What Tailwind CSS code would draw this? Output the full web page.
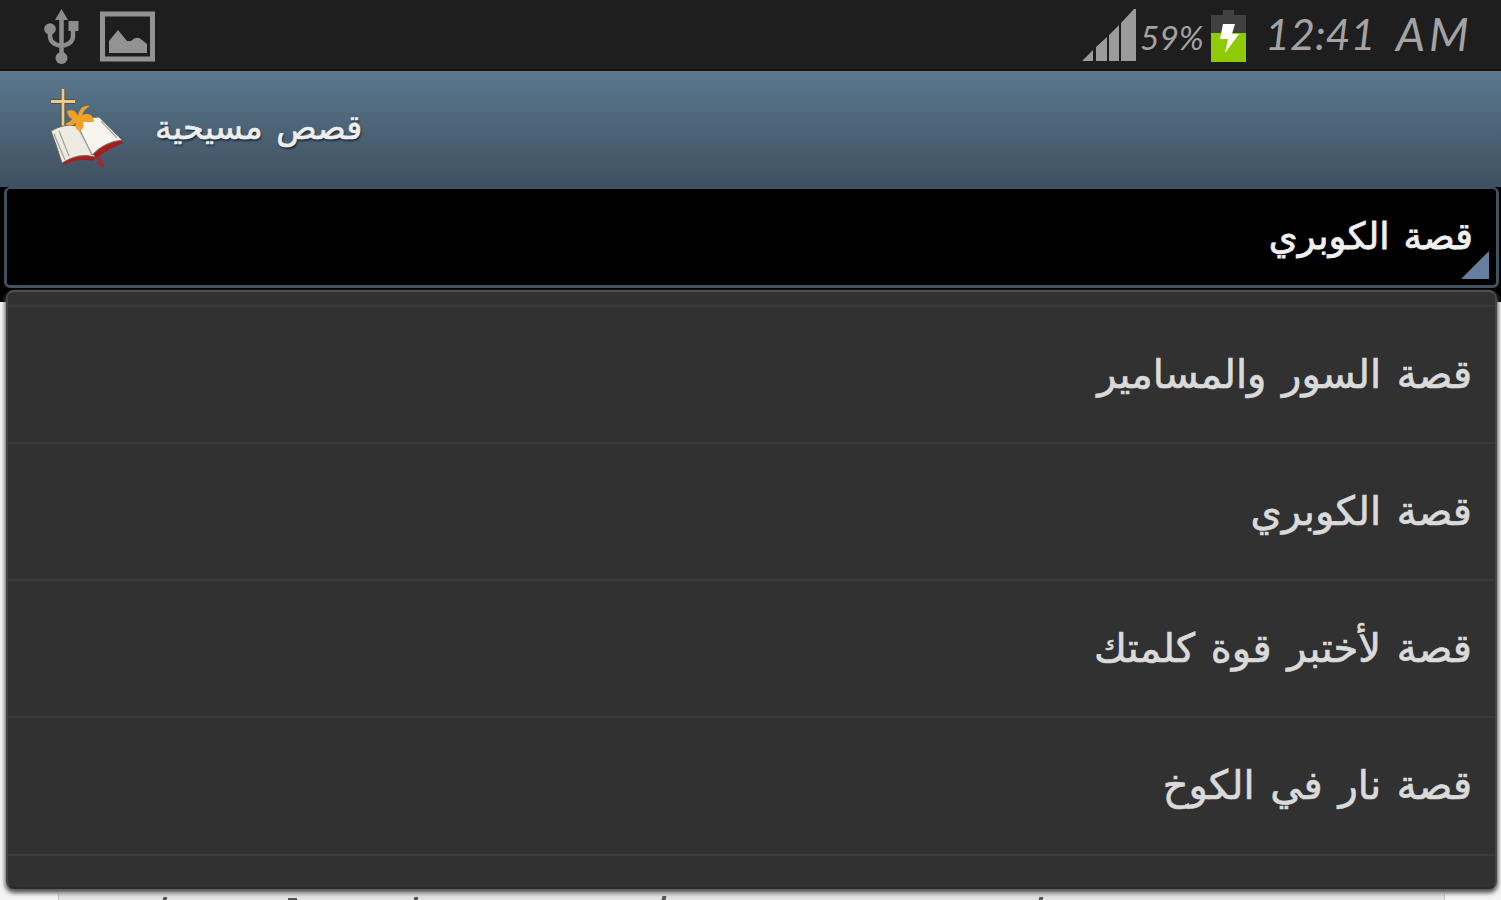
<!DOCTYPE html>
<html lang="ar">
<head>
	<meta charset="UTF-8">
	<meta name="viewport" content="width=device-width, initial-scale=1.0">
	<title>قصص مسيحية</title>
	<script src="https://cdn.jsdelivr.net/npm/@tailwindcss/browser@4"></script>
</head>
<body class="bg-[#f4f4f4] font-['DejaVu_Sans',sans-serif]">
	<div class="relative w-[1501px] h-[900px] overflow-hidden flex flex-col">

		<!-- Status bar -->
		<header class="h-[71px] shrink-0 bg-[#1e1e1e] border-b-2 border-[#15120f] flex justify-between">
			<div class="flex pl-[43px] pt-[8px] gap-[20px]">
				<svg width="37" height="58" viewBox="0 0 37 58" fill="none" stroke="#8d8d8d" stroke-width="4.500">
					<path d="M18.500 8V50M7 22V28Q7 36 18.500 38Q30 36 30 28V20"/>
					<path d="M12 12L18.500 1L25 12Z" fill="#8d8d8d" stroke="none"/>
					<circle cx="7" cy="21" r="5.800" fill="#8d8d8d" stroke="none"/>
					<rect x="25.500" y="13" width="10" height="10" fill="#8d8d8d" stroke="none"/>
					<circle cx="18.500" cy="50" r="6" fill="#8d8d8d" stroke="none"/>
				</svg>
				<svg class="mt-[3px]" width="55" height="51" viewBox="0 0 55 51">
					<rect x="2.500" y="3" width="50" height="45" fill="none" stroke="#939393" stroke-width="5"/>
					<path d="M9 42V30L18 19L27 30L31 30Q37 24 42 29L47 33V42Z" fill="#939393"/>
				</svg>
			</div>
			<div class="flex text-[#a3a3a3] font-['Lato',sans-serif] italic whitespace-nowrap">
				<svg class="mt-[8px] -ml-[4px] mr-[1px]" width="55" height="55" viewBox="0 0 55 55" fill="#9b9b9b">
					<path d="M0 53L11 42V53ZM14 39L25 29V53H14ZM27 27L37 17V53H27ZM39 15L52 1H54V53H39Z"/>
				</svg>
				<span class="w-[73px] pl-[2px] pt-[15px] text-[33.5px] leading-[44px]">59%</span>
				<svg class="mt-[9px]" width="36" height="53" viewBox="0 0 36 53">
					<path d="M12 1H23V6H35V25H0V6H12Z" fill="#414141"/>
					<rect y="24" width="35" height="29" fill="#8ecb04"/>
					<path d="M12 15H24L21 25H28L14 44L17 30H9Z" fill="#fff"/>
				</svg>
				<span class="w-[254px] pl-[18px] pt-[8px] flex text-[43px] leading-[52px]">
					<span class="w-[131px]">12:41</span>
					<span class="tracking-[4px] text-[46px]">AM</span>
				</span>
			</div>
		</header>

		<!-- Title bar -->
		<div class="h-[116px] shrink-0 bg-linear-to-b from-[#5b788e] to-[#3e5060] flex pl-[48px]">
			<svg class="mt-[16px]" width="78" height="84" viewBox="0 0 78 84">
				<path d="M15 2V42M3 14.500H27" stroke="#4e4b40" stroke-width="4.500" fill="none"/>
				<path d="M15 2V42M3 14.500H27" stroke="#eecb88" stroke-width="2.800" fill="none"/>
				<path d="M12 72L16 78Q30 71 44 74Q55 65 75 56L72 50L45 64L14 72Z" fill="#a61d1e"/>
				<path d="M49 70Q54 72 51 76L56 79" stroke="#b3202a" stroke-width="3" fill="none"/>
				<path d="M3 44Q16 36 29 39L47 70Q31 65 14 76Q9 60 3 44Z" fill="#edeae1" stroke="#696a60"/>
				<path d="M30 39Q39 30 51 30L74 53Q56 55 44 68Z" fill="#f7f5ed" stroke="#73746a"/>
				<path d="M6 47L17 73M11 44L21 69M53 34L69 51M29 39L44 67" stroke="#a7a89b" stroke-width="1.300" fill="none"/>
				<path d="M19 24Q27 21 30 29Q32 17 42 19Q36 22 34 28Q45 24 46 35H35Q37 43 31 44Q26 41 28 36Q22 41 17 37Q24 34 24 32Q20 30 19 24Z" fill="#f1a128"/>
			</svg>
			<h1 class="ml-[29px] mt-[35px] h-[44px] text-[33.5px] leading-[44px] [word-spacing:3px] text-[#eeeeee] [-webkit-text-stroke:0.6px_#eeeeee] text-shadow-[1px_2px_2px_#1b2935] whitespace-nowrap" dir="rtl">قصص مسيحية</h1>
		</div>

		<!-- Spinner -->
		<div class="h-[115px] shrink-0 bg-black pl-[4px] pr-[2px]">
			<div class="relative h-[101px] border-x-3 border-b-3 border-t-2 border-[#405260] rounded-[6px] flex justify-start pr-[23px]" dir="rtl">
				<span class="mt-[25px] text-[37px] leading-[46px] [word-spacing:2px] text-[#f0f0f0] [-webkit-text-stroke:0.8px_#f0f0f0] whitespace-nowrap">قصة الكوبري</span>
				<svg class="absolute right-[7px] bottom-[6px]" width="28" height="28"><path d="M0 28L28 0V28Z" fill="#667f9f"/></svg>
			</div>
		</div>

		<!-- Story page behind the list, only the tops of its first line show -->
		<div class="flex-1 relative">
			<div class="absolute bottom-0 left-[58px] w-[1387px] h-[6px] bg-[#e3e3e3] border-x border-[#c2c2c2]"></div>
			<i class="absolute bottom-0 left-[163px] w-[4px] h-[3px] bg-[#555] -skew-x-12"></i>
			<i class="absolute bottom-0 left-[288px] w-[9px] h-[2px] bg-[#555]"></i>
			<i class="absolute bottom-0 left-[414px] w-[4px] h-[3px] bg-[#555] -skew-x-12"></i>
			<i class="absolute bottom-0 left-[662px] w-[4px] h-[4px] bg-[#555] -skew-x-12"></i>
			<i class="absolute bottom-0 left-[1039px] w-[4px] h-[3px] bg-[#555] -skew-x-12"></i>
		</div>

		<!-- Dropdown list -->
		<ul class="absolute left-[6px] top-[290px] w-[1491px] h-[599px] bg-[#313131] border-2 border-t-[#505050] border-x-[#444] border-b-[#2b2b2b] rounded-[8px] shadow-[0_3px_4px_1px_#555] text-[40px] leading-[50px] [word-spacing:3px] text-[#dadada] [-webkit-text-stroke:0.7px_#dadada] whitespace-nowrap" dir="rtl">
			<li class="h-[15px] border-b-2 border-[#3c3c3c]"></li>
			<li class="h-[137px] border-b-2 border-[#3c3c3c] pr-[23px] pt-[42px]">قصة السور والمسامير</li>
			<li class="h-[137px] border-b-2 border-[#3c3c3c] pr-[23px] pt-[42px]">قصة الكوبري</li>
			<li class="h-[137px] border-b-2 border-[#3c3c3c] pr-[23px] pt-[42px]">قصة لأختبر قوة كلمتك</li>
			<li class="h-[138px] border-b-2 border-[#3c3c3c] pr-[23px] pt-[42px]">قصة نار في الكوخ</li>
		</ul>
	</div>
</body>
</html>
